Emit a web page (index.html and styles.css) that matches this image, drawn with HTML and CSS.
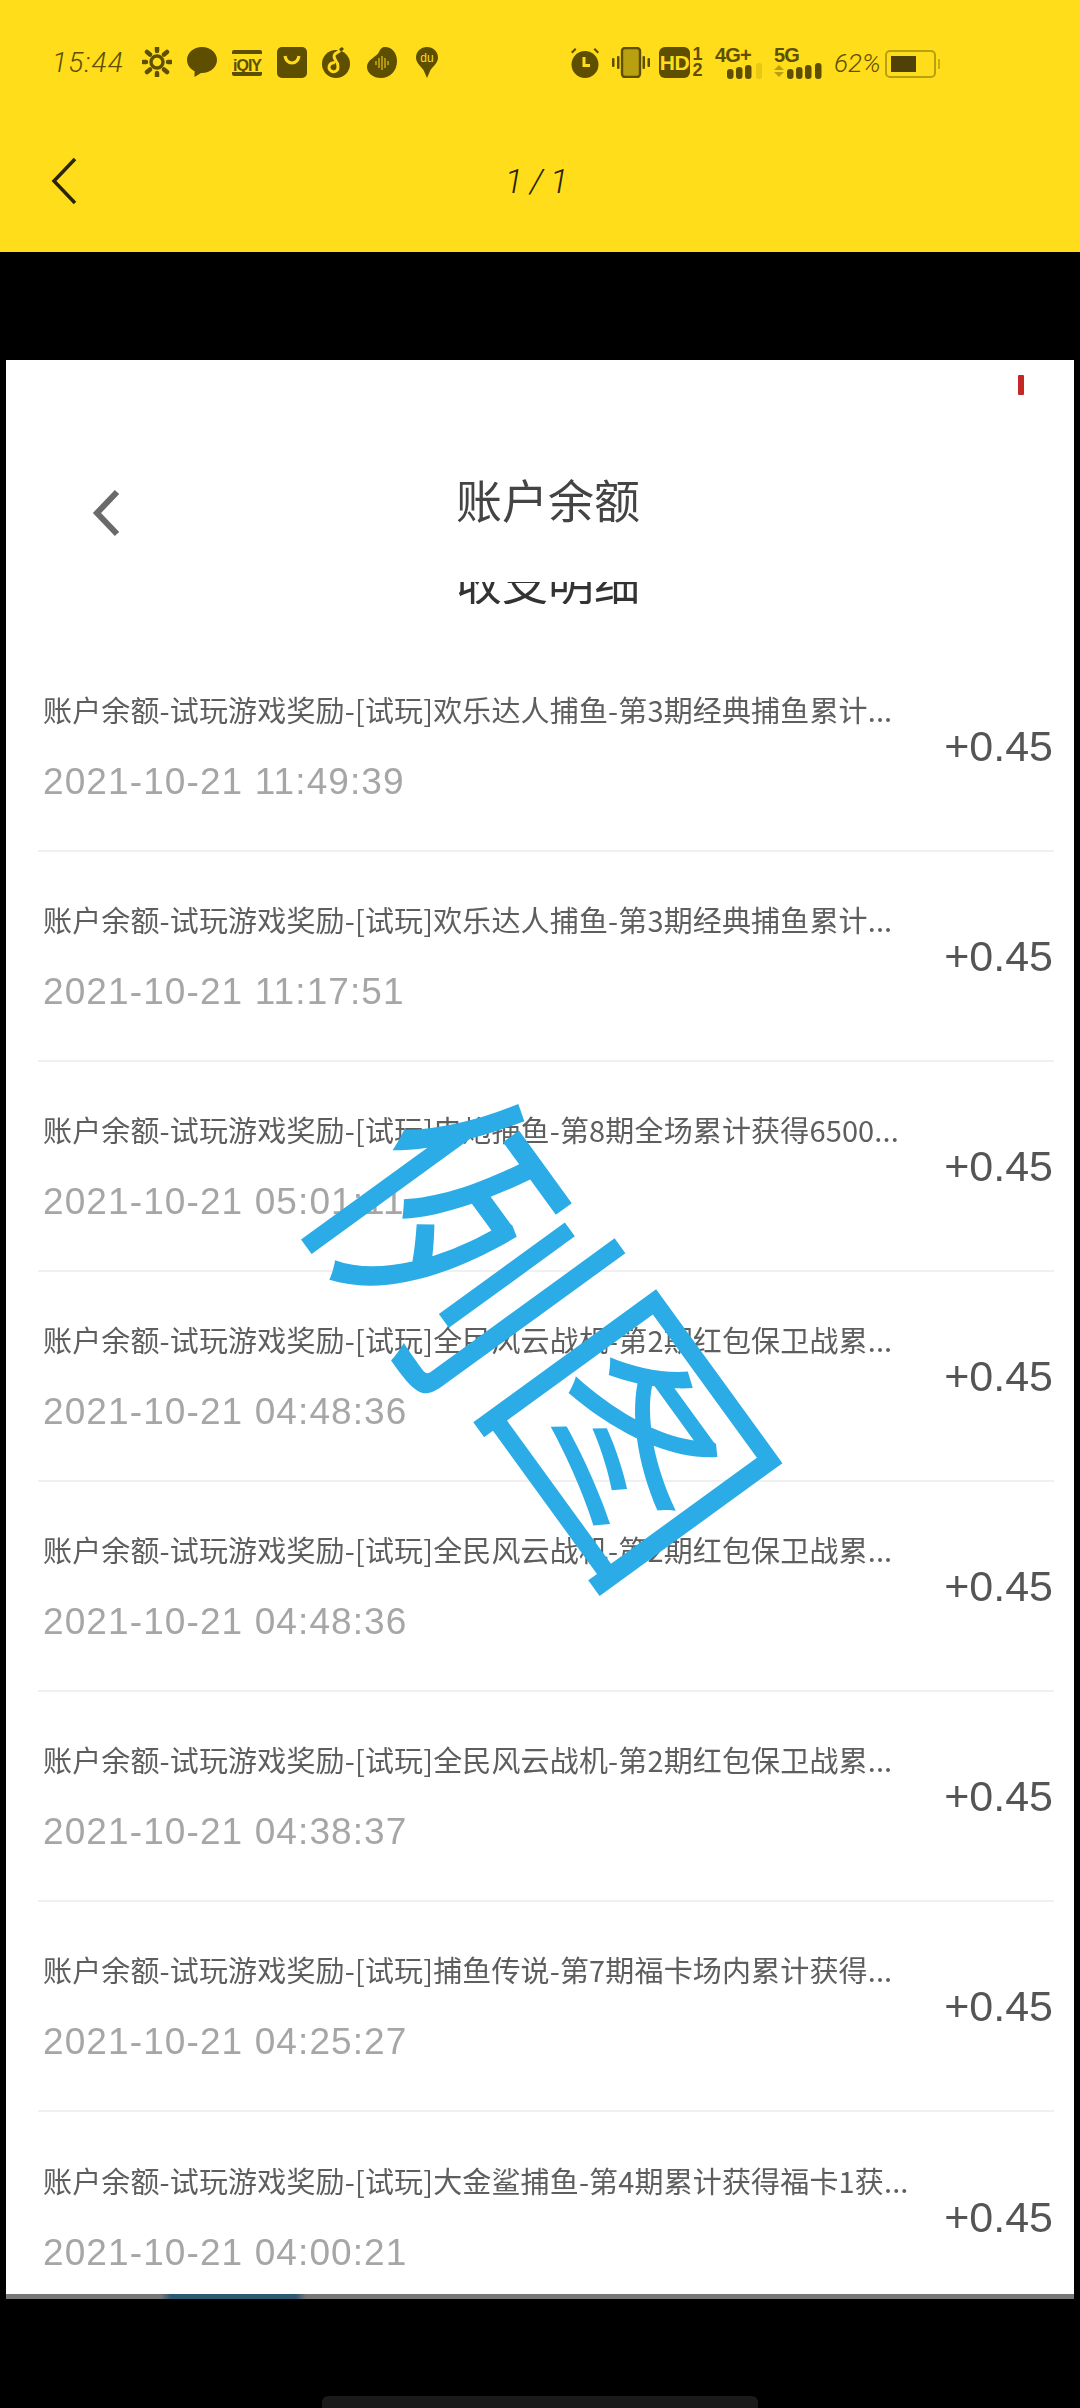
FILE: index.html
```html
<!DOCTYPE html>
<html lang="zh-CN">
<head>
<meta charset="utf-8">
<title>账户余额</title>
<link rel="stylesheet" href="styles.css">
</head>
<body>
<div class="screen">
  <header class="appbar">
    <div class="status">
      <div class="status-left">
        <span class="clock">15:44</span>
        <svg class="ic i-sun" viewBox="0 0 30 30"><circle cx="15" cy="15" r="6" fill="none" stroke-width="3.4"/><g class="rays"><path d="M15 1v3M15 26v3M1 15h3M26 15h3M5 5l3 2.500M25 5l-3 2.500M5 25l3-2.500M25 25l-3-2.500"/></g></svg>
        <svg class="ic i-bubble" viewBox="0 0 30 30"><path d="M15 0C6.700 0 0 5.700 0 13c0 5 3.200 9 7.600 11.200L7.500 30l6.500-4.100h1C23.300 25.900 30 20.200 30 13S23.300 0 15 0z"/></svg>
        <svg class="ic i-iqiyi" viewBox="0 0 30 26"><path d="M2 0h26a2 2 0 0 1 2 2v22a2 2 0 0 1-2 2H2a2 2 0 0 1-2-2V2a2 2 0 0 1 2-2z"/><rect y="4" width="30" height="18" fill="#ffdd1a"/><text x="15" y="20.500" text-anchor="middle" class="t-iqiyi">iQIY</text></svg>
        <svg class="ic i-bag" viewBox="0 0 30 31"><rect width="30" height="31" rx="5"/><path d="M8 9c1 5 4 7 7 7s6-2 7-7" fill="none" stroke="#ffdd1a" stroke-width="3.200"/></svg>
        <svg class="ic i-music" viewBox="0 0 28 31"><circle cx="14" cy="17" r="14"/><path d="M19 3l-6 4c-2 2-1 4 1 7 2 2 2 4 2 6a4.500 4.500 0 1 1-3-4" fill="none" stroke="#ffdd1a" stroke-width="3"/><path d="M17 2l3-2 2 2-3 3z"/></svg>
        <svg class="ic i-voice" viewBox="0 0 30 31"><path d="M18 0c7 0 12 6 12 14 0 10-7 17-16 17C6 31 0 26 0 20 0 12 10 10 12 5c1-3 3-5 6-5z"/><path d="M9 14v4M12 11v10M15 9v14M18 11v10M21 14v4" stroke="#ffdd1a" stroke-width="1" fill="none"/></svg>
        <svg class="ic i-pin" viewBox="0 0 22 31"><path d="M11 0c6 0 11 4.500 11 10.500 0 5.500-5 9-7.500 12.500L11 31l-3.500-8C5 19.500 0 16 0 10.500 0 4.500 5 0 11 0z"/><text x="11" y="15" text-anchor="middle" class="t-du">du</text></svg>
      </div>
      <div class="status-right">
        <svg class="ic i-alarm" viewBox="0 0 28 30"><circle cx="14" cy="16.500" r="13.500"/><path d="M4 0L0 4l1.500 1.500 4-4zM24 0l4 4-1.500 1.500-4-4z"/><path d="M13 9v8.500h6" fill="none" stroke="#ffdd1a" stroke-width="3"/></svg>
        <svg class="ic i-vib" viewBox="0 0 38 31"><rect x="10" y="1" width="18" height="29" rx="3" fill="#b8a010" stroke="#5e4e00" stroke-width="2.400"/><rect x="5" y="9" width="2.500" height="13" rx="1"/><rect y="11" width="2.500" height="9" rx="1"/><rect x="30.500" y="9" width="2.500" height="13" rx="1"/><rect x="35.500" y="11" width="2.500" height="9" rx="1"/></svg>
        <div class="hd-group">
          <svg class="ic i-hd" viewBox="0 0 31 31"><rect width="31" height="31" rx="6"/><text x="15.500" y="23" text-anchor="middle" class="t-hd">HD</text></svg>
          <div class="sim"><span>1</span><span>2</span></div>
        </div>
        <div class="net net-4g">
          <span class="net-label">4G+</span>
          <svg class="i-bars" viewBox="0 0 35 16"><rect y="6" width="6.500" height="10" rx="3"/><rect x="9" y="4" width="6.500" height="12" rx="3"/><rect x="18" y="2" width="6.500" height="14" rx="3"/><rect x="29" width="6" height="16" rx="2.500" class="dim"/></svg>
        </div>
        <div class="net net-5g">
          <span class="net-label">5G</span>
          <svg class="i-bars5" viewBox="0 0 48 16"><path d="M0 7l5-5 5 5zM0 9l5 5 5-5z" class="dim2"/><rect x="13" y="6" width="6.500" height="10" rx="3"/><rect x="22" y="4" width="6.500" height="12" rx="3"/><rect x="31" y="2" width="6.500" height="14" rx="3"/><rect x="41" width="6.500" height="16" rx="3"/></svg>
        </div>
        <span class="pct">62%</span>
        <div class="battery"><div class="battery-fill"></div></div>
        <div class="battery-nub"></div>
      </div>
    </div>
    <nav class="viewer-nav">
      <svg class="viewer-back" viewBox="0 0 26 48"><path d="M24 2L3 24l21 22" fill="none"/></svg>
      <span class="viewer-count">1/1</span>
    </nav>
  </header>

  <main class="card">
    <div class="card-top">
      <div class="red-mark"></div>
      <div class="card-nav">
        <svg class="card-back" viewBox="0 0 32 50"><path d="M27 4L7 25l20 21" fill="none"/></svg>
        <h1 class="card-title">账户余额</h1>
      </div>
      <div class="sub-clip"><h2 class="sub-title">收支明细</h2></div>
    </div>
    <ul class="rows">
      <li class="row"><div class="row-main"><p class="row-title">账户余额-试玩游戏奖励-[试玩]欢乐达人捕鱼-第3期经典捕鱼累计...</p><p class="row-date">2021-10-21 11:49:39</p></div><span class="row-amount">+0.45</span></li>
      <li class="row"><div class="row-main"><p class="row-title">账户余额-试玩游戏奖励-[试玩]欢乐达人捕鱼-第3期经典捕鱼累计...</p><p class="row-date">2021-10-21 11:17:51</p></div><span class="row-amount">+0.45</span></li>
      <li class="row"><div class="row-main"><p class="row-title">账户余额-试玩游戏奖励-[试玩]电炮捕鱼-第8期全场累计获得6500...</p><p class="row-date">2021-10-21 05:01:11</p></div><span class="row-amount">+0.45</span></li>
      <li class="row"><div class="row-main"><p class="row-title">账户余额-试玩游戏奖励-[试玩]全民风云战机-第2期红包保卫战累...</p><p class="row-date">2021-10-21 04:48:36</p></div><span class="row-amount">+0.45</span></li>
      <li class="row"><div class="row-main"><p class="row-title">账户余额-试玩游戏奖励-[试玩]全民风云战机-第2期红包保卫战累...</p><p class="row-date">2021-10-21 04:48:36</p></div><span class="row-amount">+0.45</span></li>
      <li class="row"><div class="row-main"><p class="row-title">账户余额-试玩游戏奖励-[试玩]全民风云战机-第2期红包保卫战累...</p><p class="row-date">2021-10-21 04:38:37</p></div><span class="row-amount">+0.45</span></li>
      <li class="row"><div class="row-main"><p class="row-title">账户余额-试玩游戏奖励-[试玩]捕鱼传说-第7期福卡场内累计获得...</p><p class="row-date">2021-10-21 04:25:27</p></div><span class="row-amount">+0.45</span></li>
      <li class="row"><div class="row-main"><p class="row-title">账户余额-试玩游戏奖励-[试玩]大金鲨捕鱼-第4期累计获得福卡1获...</p><p class="row-date">2021-10-21 04:00:21</p></div><span class="row-amount">+0.45</span></li>
    </ul>
    <div class="card-edge"></div>
  </main>

  <div class="watermark"><span class="wm-a">例</span><span class="wm-b">图</span></div>
  <div class="home-bar"></div>
</div>
</body>
</html>
```

FILE: styles.css
```css
* { box-sizing: border-box; }
html, body { margin: 0; padding: 0; background: #000; }
.screen {
  position: relative;
  width: 1080px;
  height: 2408px;
  overflow: hidden;
  background: #000;
  font-family: "Liberation Sans", "Noto Sans CJK SC", sans-serif;
}

/* Yellow app bar */
.appbar { height: 252px; background: #ffdd1a; color: #5e4e00; }
.status {
  display: flex;
  justify-content: space-between;
  height: 78px;
  padding: 47px 140px 0 50px;
}
.status-left, .status-right { display: flex; align-items: flex-start; height: 31px; }
.ic { display: block; fill: #5e4e00; stroke: none; }
.clock {
  width: 92px;
  padding-left: 2px;
  font: italic 300 28px/30px Roboto, sans-serif;
  letter-spacing: 1.200px;
  margin-top: 1px;
}
.i-sun { width: 30px; height: 30px; stroke: #5e4e00; }
.i-sun .rays { stroke-width: 4.500; stroke-linecap: round; }
.i-bubble { width: 30px; height: 30px; margin-left: 15px; }
.i-iqiyi { width: 30px; height: 26px; margin: 3px 0 0 15px; }
.t-iqiyi { font: 700 16px "Liberation Sans", sans-serif; fill: #5e4e00; letter-spacing: -1px; }
.i-bag { width: 30px; height: 31px; margin-left: 15px; }
.i-music { width: 28px; height: 31px; margin-left: 15px; }
.i-voice { width: 30px; height: 31px; margin-left: 17px; }
.i-pin { width: 22px; height: 31px; margin-left: 19px; }
.t-du { font: 400 12px "Liberation Sans", sans-serif; fill: #ffdd1a; }

.i-alarm { width: 28px; height: 30px; margin-top: 1px; }
.i-vib { width: 38px; height: 31px; margin-left: 13px; }
.hd-group { display: flex; margin-left: 9px; }
.i-hd { width: 31px; height: 31px; }
.t-hd { font: 700 21px "Liberation Sans", sans-serif; fill: #ffdd1a; letter-spacing: -.5px; }
.sim {
  display: flex;
  flex-direction: column;
  width: 13px;
  margin-left: 1px;
  font: 700 18px/15.500px "Liberation Sans", sans-serif;
  text-align: center;
}
.net { height: 31px; }
.net-4g { width: 47px; margin-left: 11px; }
.net-5g { width: 48px; margin-left: 12px; }
.net-label {
  display: block;
  font: 700 20px/16px "Liberation Sans", sans-serif;
  letter-spacing: -0.800px;
}
.i-bars { display: block; width: 35px; height: 16px; margin: 0 0 0 12px; fill: #5e4e00; }
.i-bars .dim { fill: #e8c810; }
.i-bars5 { display: block; width: 48px; height: 16px; fill: #5e4e00; }
.i-bars5 .dim2 { fill: #b8a010; }
.pct {
  width: 46px;
  margin: 1px 0 0 12px;
  font: italic 300 26px/30px Roboto, sans-serif;
}
.battery {
  width: 51px;
  height: 28px;
  margin: 3px 0 0 5px;
  padding: 4px;
  border: 2px solid #b8a010;
  border-radius: 5px;
}
.battery-fill { width: 25px; height: 16px; background: #4f4108; }
.battery-nub { width: 2px; height: 10px; margin: 12px 0 0 2px; background: #c9ae10; }

.viewer-nav {
  position: relative;
  display: flex;
  align-items: center;
  justify-content: center;
  height: 104px;
  margin-top: 50px;
}
.viewer-back {
  position: absolute;
  left: 51px;
  top: 29px;
  width: 26px;
  height: 48px;
  stroke: #2a2508;
  stroke-width: 3.500;
}
.viewer-count {
  font: italic 300 34px/40px Roboto, sans-serif;
  letter-spacing: 7px;
  color: #2a2508;
  margin-top: 2px;
}

/* Card (screenshot of the app) */
.card {
  display: flex;
  flex-direction: column;
  height: 1939px;
  margin: 108px 6px 0;
  background: #fff;
  overflow: hidden;
}
.card-top { position: relative; height: 282px; flex: none; }
.red-mark {
  position: absolute;
  right: 50px;
  top: 15px;
  width: 6px;
  height: 20px;
  background: #c62828;
  border-radius: 1px;
  filter: blur(.6px);
}
.card-nav {
  position: relative;
  display: flex;
  justify-content: center;
  height: 120px;
  padding: 108px 0 0 16px;
}
.card-back {
  position: absolute;
  left: 84px;
  top: 128px;
  width: 32px;
  height: 50px;
  stroke: #6a6a6a;
  stroke-width: 6;
}
.card-title {
  margin: 0;
  font: 400 46px/60px "Noto Sans CJK SC", sans-serif;
  color: #444;
  white-space: nowrap;
  filter: blur(.5px);
}
.sub-clip {
  position: absolute;
  left: 0;
  right: 0;
  top: 222px;
  height: 22px;
  padding-left: 16px;
  overflow: hidden;
  text-align: center;
}
.sub-title {
  margin: -35px 0 0;
  font: 400 46px/66px "Noto Sans CJK SC", sans-serif;
  color: #333;
  filter: blur(.5px);
}

.rows {
  flex: 1 1 0;
  min-height: 0;
  margin: 0;
  padding: 0 20px 0 32px;
  list-style: none;
  overflow: hidden;
}
.row {
  display: flex;
  align-items: center;
  justify-content: space-between;
  height: 210px;
  padding-left: 5px;
  border-bottom: 2px solid #f0f0f0;
}
.row:last-child { border-bottom: 0; }
.row-main { min-width: 0; padding-top: 4px; }
.row-title {
  margin: 0;
  font: 400 29px/40px "Noto Sans CJK SC", sans-serif;
  letter-spacing: .15px;
  color: #5e5e5e;
  white-space: nowrap;
  filter: blur(.5px);
}
.row-date {
  margin: 28px 0 0;
  font: 400 37px/50px "Liberation Sans", sans-serif;
  letter-spacing: 1.100px;
  color: #a6a6a6;
  white-space: nowrap;
  filter: blur(.5px);
}
.row-amount {
  flex: none;
  margin-right: 1px;
  font: 400 43px/50px "Liberation Sans", sans-serif;
  color: #555;
  filter: blur(.5px);
}
.card-edge {
  flex: none;
  height: 5px;
  background: linear-gradient(90deg, #777 0 155px, #2d5a70 165px 290px, #777 300px);
}

/* Diagonal stamp over the list */
.watermark {
  position: absolute;
  left: 295px;
  top: 1201px;
  width: 516px;
  height: 258px;
  display: flex;
  transform: rotate(54deg);
  font: 400 258px/258px "Noto Sans CJK SC", sans-serif;
  color: #2bace6;
  text-align: center;
}
.wm-a, .wm-b { display: block; width: 258px; flex: none; }
.wm-a { transform: translateY(8px) scaleY(1.08); }
.wm-b { transform: translate(6px, -14px); }
.home-bar {
  position: absolute;
  left: 322px;
  top: 2396px;
  width: 436px;
  height: 12px;
  background: #1a1a1a;
  border-radius: 6px 6px 0 0;
}
```
